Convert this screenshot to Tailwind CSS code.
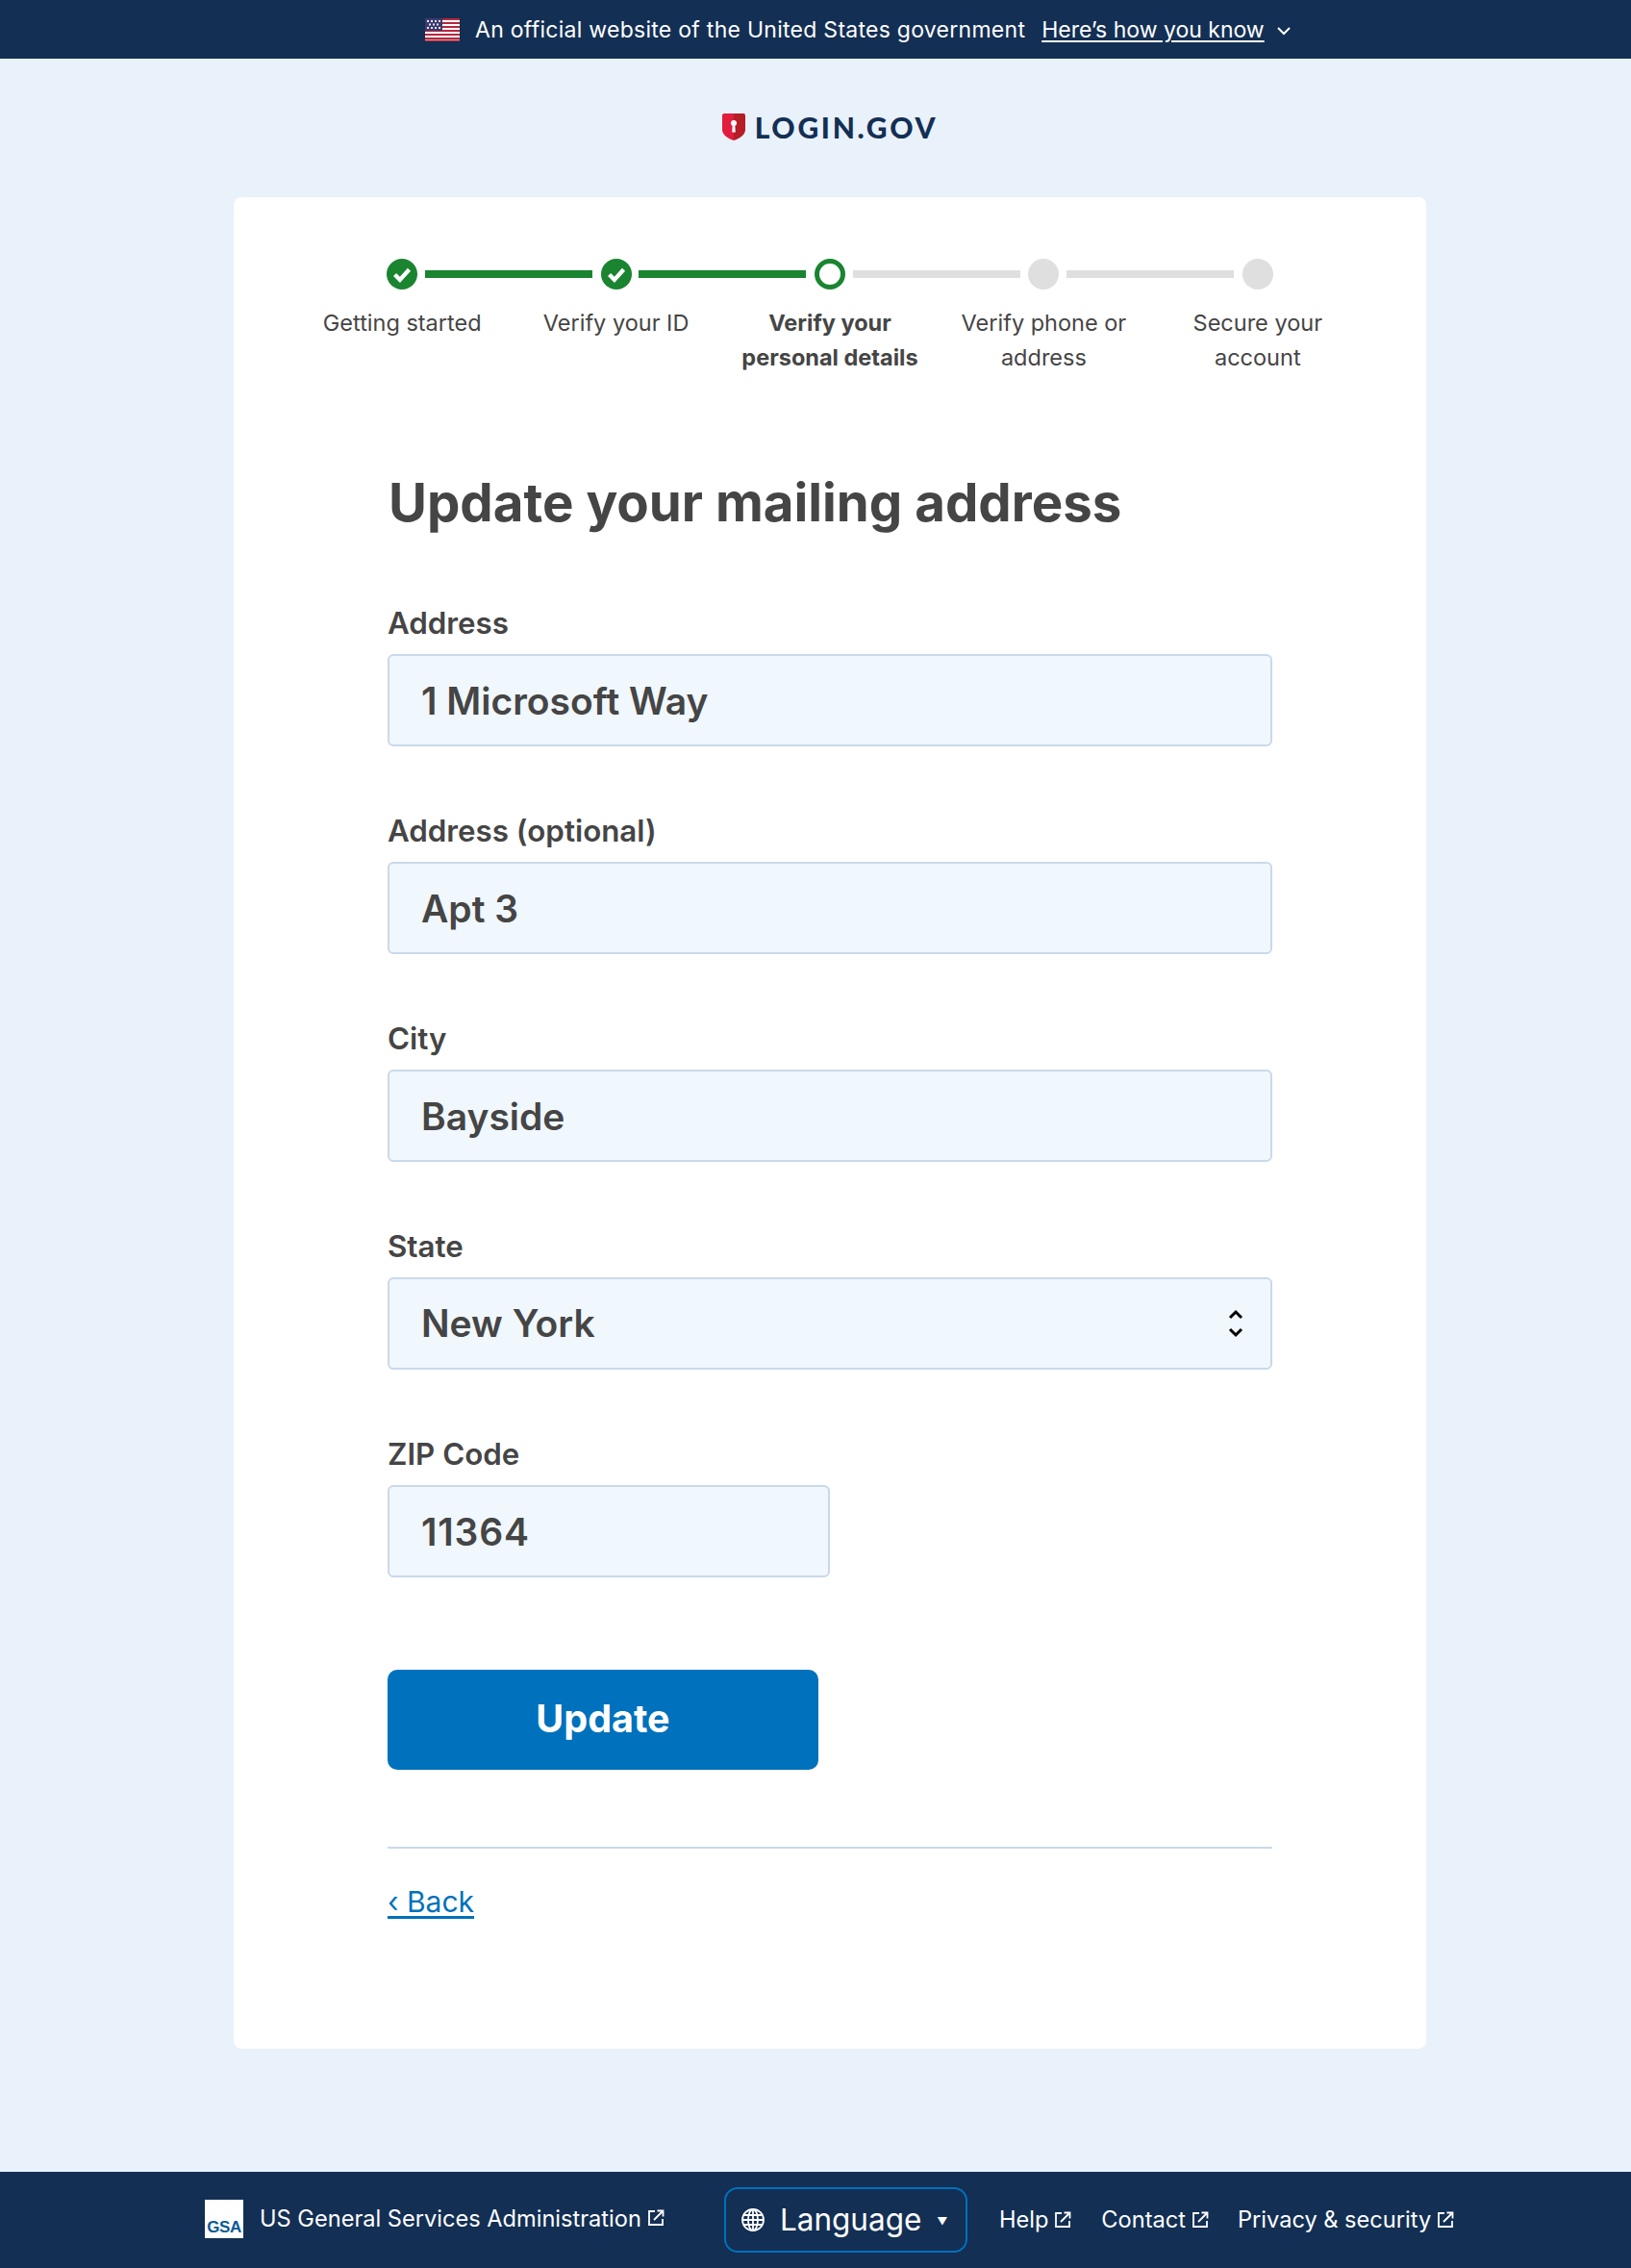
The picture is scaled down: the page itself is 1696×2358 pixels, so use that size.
<!DOCTYPE html>
<html lang="en">
<head>
    <meta charset="UTF-8">
    <meta name="viewport" content="width=device-width, initial-scale=1.0">
    <title>Update your mailing address</title>
    <script src="https://cdn.jsdelivr.net/npm/@tailwindcss/browser@4"></script>
</head>
<body class="bg-[#e9f1fa] font-[Inter,sans-serif] text-[#454545] w-[1696px] h-[2358px] flex flex-col">
    <!-- gov banner -->
    <div class="h-[61px] bg-[#132f54] text-white flex items-center pl-[442px]">
        <svg class="w-[36px] h-[24px] mr-[16px]" viewBox="0 0 36 24">
            <rect width="36" height="24" fill="#fff"/>
            <g fill="#b5283d">
                <rect width="36" height="2"/><rect y="4" width="36" height="2"/><rect y="8" width="36" height="2"/><rect y="12" width="36" height="2"/><rect y="16" width="36" height="2"/><rect y="20" width="36" height="2"/><rect y="22.5" width="36" height="1.5"/>
            </g>
            <rect width="18" height="13" fill="#3c3b6e"/>
            <g fill="#dfe1f0">
                <rect x="2" y="2" width="2" height="2"/><rect x="6" y="2" width="2" height="2"/><rect x="10" y="2" width="2" height="2"/><rect x="14" y="2" width="2" height="2"/>
                <rect x="4" y="5.5" width="2" height="2"/><rect x="8" y="5.5" width="2" height="2"/><rect x="12" y="5.5" width="2" height="2"/>
                <rect x="2" y="9" width="2" height="2"/><rect x="6" y="9" width="2" height="2"/><rect x="10" y="9" width="2" height="2"/><rect x="14" y="9" width="2" height="2"/>
            </g>
        </svg>
        <span class="text-[23px] tracking-[0.27px] mt-[1px]">An official website of the United States government</span>
        <a href="#" class="text-[23px] underline underline-offset-3 ml-[17px] mt-[1px]">Here’s how you know</a>
        <svg class="w-[16px] h-[10px] ml-[12px] mt-[2px]" viewBox="0 0 16 10" fill="none" stroke="#fff" stroke-width="2"><path d="M2 2l6 6 6-6"/></svg>
    </div>

    <!-- logo -->
    <div class="h-[144px] flex items-center justify-center pl-[30px]">
        <div class="flex items-center mt-[-2px]">
            <svg class="w-[24px] h-[30px] mr-[10px]" viewBox="0 0 24 30">
                <path d="M2 1h10v28C6 27 0 23 0 18V3a2 2 0 0 1 2-2z" fill="#e21c3d"/>
                <path d="M12 1h10a2 2 0 0 1 2 2v15c0 5-6 9-12 11z" fill="#b51d27"/>
                <circle cx="12" cy="11" r="3" fill="#fff"/>
                <path d="M10.800 12h2.400l.6 8.500h-3.600z" fill="#fff"/>
            </svg>
            <span class="font-[Lato,sans-serif] font-black text-[30px] leading-none tracking-[2.7px] text-[#132f54]">LOGIN.GOV</span>
        </div>
    </div>

    <!-- card -->
    <main class="w-[1240px] h-[1925px] ml-[243px] bg-white rounded-[8px] pt-[64px] px-[64px]">
        <div class="grid grid-cols-5 w-[1112px] text-[23.5px] leading-[36px] text-center">
            <div class="relative flex flex-col items-center">
                <svg class="w-[32px] h-[32px]" viewBox="0 0 30 30"><circle cx="15" cy="15" r="15" fill="#1a8431"/><path d="M8 15.500l5 5 9-10" fill="none" stroke="#fff" stroke-width="4"/></svg>
                <div class="absolute left-[135px] top-[12px] w-[174px] h-[8px] bg-[#1a8431]"></div>
                <div class="mt-[17px]">Getting started</div>
            </div>
            <div class="relative flex flex-col items-center">
                <svg class="w-[32px] h-[32px]" viewBox="0 0 30 30"><circle cx="15" cy="15" r="15" fill="#1a8431"/><path d="M8 15.500l5 5 9-10" fill="none" stroke="#fff" stroke-width="4"/></svg>
                <div class="absolute left-[135px] top-[12px] w-[174px] h-[8px] bg-[#1a8431]"></div>
                <div class="mt-[17px]">Verify your ID</div>
            </div>
            <div class="relative flex flex-col items-center">
                <div class="w-[32px] h-[32px] rounded-full border-[5px] border-[#1a8431] bg-white"></div>
                <div class="absolute left-[135px] top-[12px] w-[174px] h-[8px] bg-[#dfdfdf]"></div>
                <div class="mt-[17px] font-bold">Verify your<br>personal details</div>
            </div>
            <div class="relative flex flex-col items-center">
                <div class="w-[32px] h-[32px] rounded-full bg-[#dfdfdf]"></div>
                <div class="absolute left-[135px] top-[12px] w-[174px] h-[8px] bg-[#dfdfdf]"></div>
                <div class="mt-[17px]">Verify phone or<br>address</div>
            </div>
            <div class="flex flex-col items-center">
                <div class="w-[32px] h-[32px] rounded-full bg-[#dfdfdf]"></div>
                <div class="mt-[17px]">Secure your<br>account</div>
            </div>
        </div>

        <div class="w-[920px] mx-auto">
            <h1 class="text-[54.6px] leading-[64px] font-bold mt-[100px] ml-[1px]">Update your mailing address</h1>

            <form class="mt-[76px]">
                <label class="block text-[31.3px] leading-[36px] font-semibold">Address</label>
                <input value="1 Microsoft Way" class="block mt-[14px] w-full h-[96px] px-[33px] bg-[#f0f7fd] border-2 border-[#c9d9ea] rounded-[6px] text-[39px] font-semibold outline-none">

                <label class="block mt-[70px] text-[31.3px] leading-[36px] font-semibold">Address (optional)</label>
                <input value="Apt 3" class="block mt-[14px] w-full h-[96px] px-[33px] bg-[#f0f7fd] border-2 border-[#c9d9ea] rounded-[6px] text-[39px] font-semibold outline-none">

                <label class="block mt-[70px] text-[31.3px] leading-[36px] font-semibold">City</label>
                <input value="Bayside" class="block mt-[14px] w-full h-[96px] px-[33px] bg-[#f0f7fd] border-2 border-[#c9d9ea] rounded-[6px] text-[39px] font-semibold outline-none">

                <label class="block mt-[70px] text-[31.3px] leading-[36px] font-semibold">State</label>
                <div class="mt-[14px] w-full h-[96px] pl-[33px] pr-[28px] bg-[#f0f7fd] border-2 border-[#c9d9ea] rounded-[6px] text-[39px] font-semibold flex items-center justify-between">
                    <span>New York</span>
                    <svg class="w-[16px] h-[30px]" viewBox="0 0 16 30" fill="none" stroke="#000" stroke-width="3"><path d="M2 9l6-6 6 6M2 21l6 6 6-6"/></svg>
                </div>

                <label class="block mt-[70px] text-[31.3px] leading-[36px] font-semibold">ZIP Code</label>
                <input value="11364" class="block mt-[14px] w-[460px] h-[96px] px-[33px] bg-[#f0f7fd] border-2 border-[#c9d9ea] rounded-[6px] text-[39px] font-semibold tracking-[0.8px] outline-none">

                <button type="button" class="block mt-[96px] w-[448px] h-[104px] bg-[#0071bc] text-white rounded-[10px] text-[39.5px] font-bold">Update</button>
            </form>

            <div class="mt-[80px] pt-[35px] border-t-2 border-[#c9d9ea]">
                <a href="#" class="text-[#0071bc] underline underline-offset-4 text-[30px] leading-[40px]">‹ Back</a>
            </div>
        </div>
    </main>

    <!-- footer -->
    <footer class="mt-auto h-[100px] bg-[#132f54] text-white flex items-center pl-[213px] text-[23.6px]">
        <div class="w-[40px] h-[40px] bg-white mt-[-2px] flex items-end justify-center">
            <span class="font-['Liberation_Sans',sans-serif] font-bold text-[17px] leading-[22px] tracking-[-0.5px] text-[#0a5a96]">GSA</span>
        </div>
        <a href="#" class="ml-[17px] mb-[3px] flex items-center">US General Services Administration
            <svg class="w-[18px] h-[18px] ml-[6px]" viewBox="0 0 18 18" fill="none" stroke="#fff" stroke-width="1.800"><path d="M8 2H2v14h14v-6M7 11l9-9M10.500 1.500h6v6"/></svg>
        </a>
        <div class="ml-[62px] w-[253px] h-[68px] border-2 border-[#0071bc] rounded-[14px] flex items-center pl-[16px]">
            <svg class="w-[24px] h-[24px]" viewBox="0 0 24 24" fill="none" stroke="#fff" stroke-width="1.800"><circle cx="12" cy="12" r="11"/><ellipse cx="12" cy="12" rx="5" ry="11"/><path d="M12 1v22M1 12h22M2.500 7h19M2.500 17h19"/></svg>
            <span class="ml-[16px] text-[31.5px]">Language</span>
            <span class="ml-[16px] text-[11px] mt-[2px]">▼</span>
        </div>
        <a href="#" class="ml-[33px] flex items-center">Help
            <svg class="w-[18px] h-[18px] ml-[6px]" viewBox="0 0 18 18" fill="none" stroke="#fff" stroke-width="1.800"><path d="M8 2H2v14h14v-6M7 11l9-9M10.500 1.500h6v6"/></svg>
        </a>
        <a href="#" class="ml-[31px] flex items-center">Contact
            <svg class="w-[18px] h-[18px] ml-[6px]" viewBox="0 0 18 18" fill="none" stroke="#fff" stroke-width="1.800"><path d="M8 2H2v14h14v-6M7 11l9-9M10.500 1.500h6v6"/></svg>
        </a>
        <a href="#" class="ml-[30px] flex items-center">Privacy &amp; security
            <svg class="w-[18px] h-[18px] ml-[6px]" viewBox="0 0 18 18" fill="none" stroke="#fff" stroke-width="1.800"><path d="M8 2H2v14h14v-6M7 11l9-9M10.500 1.500h6v6"/></svg>
        </a>
    </footer>
</body>
</html>
